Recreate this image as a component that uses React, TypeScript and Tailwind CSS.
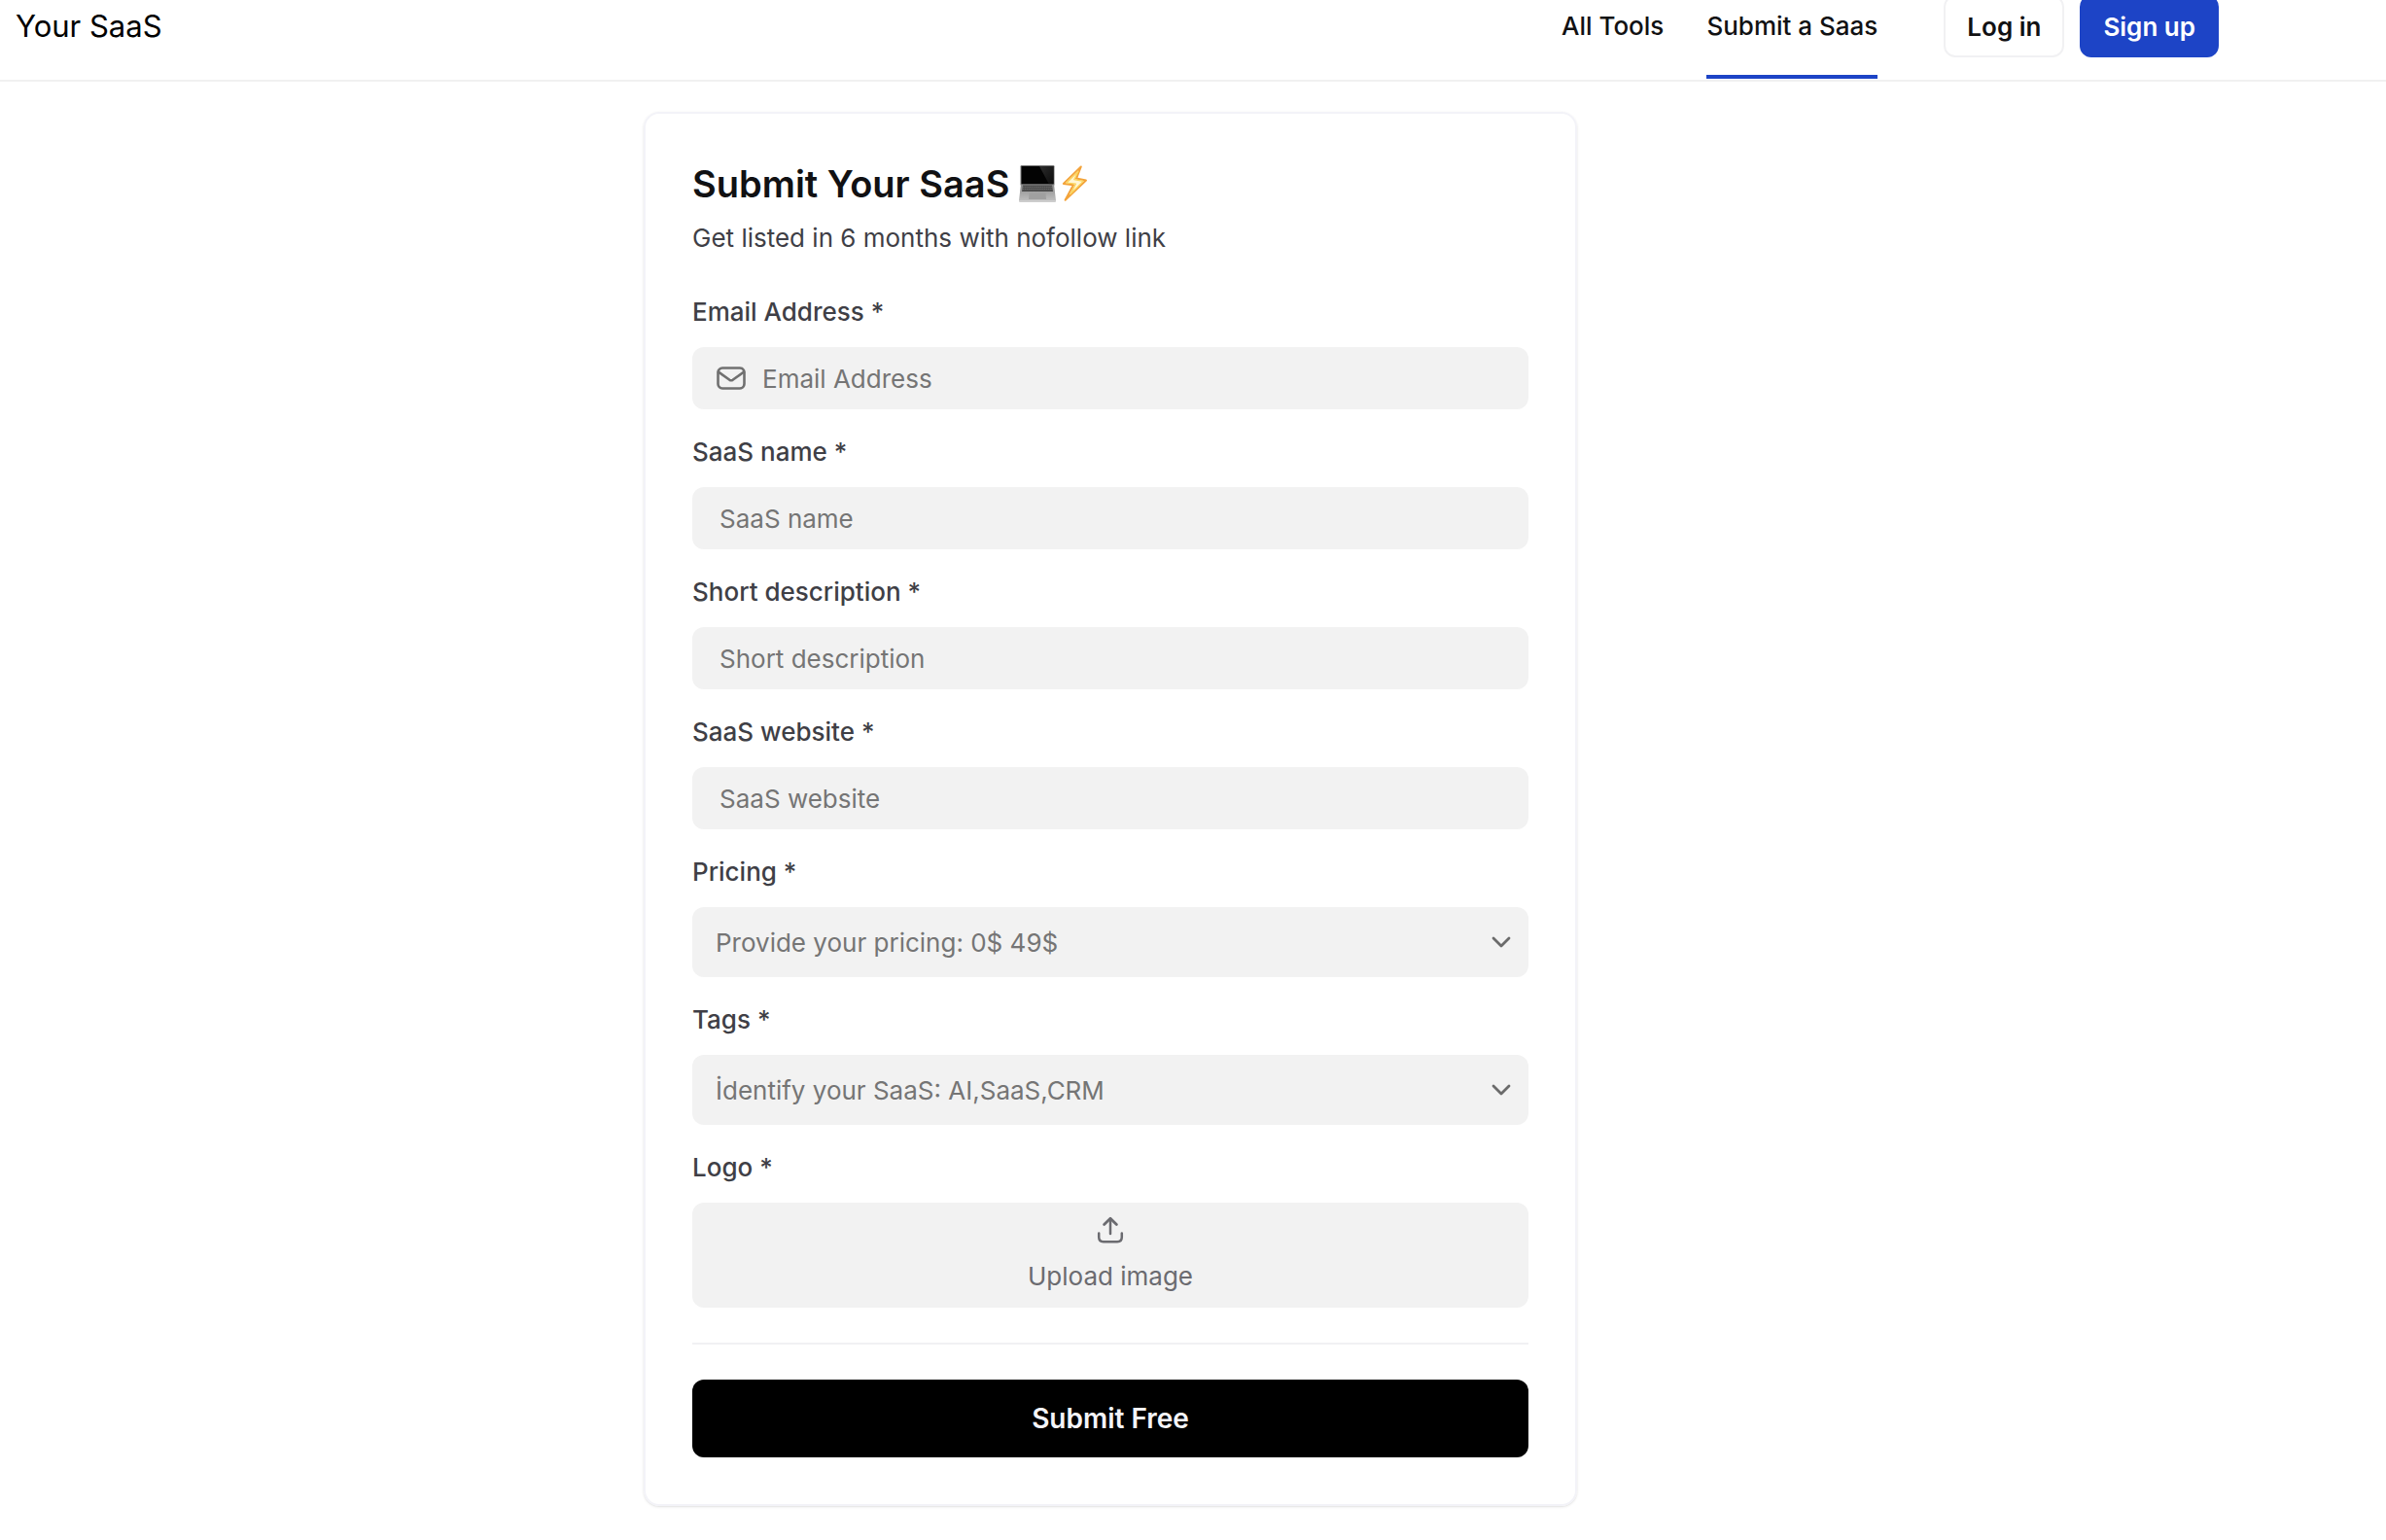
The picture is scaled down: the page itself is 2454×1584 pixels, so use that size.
import React, { useState } from "react";

function LaptopIcon() {
  return (
    <svg width="38" height="38" viewBox="0 0 38 38" role="img" aria-label="laptop">
      <defs>
        <linearGradient id="base" x1="0" y1="0" x2="0" y2="1">
          <stop offset="0" stopColor="#8a8a8a" />
          <stop offset="1" stopColor="#bdbdbd" />
        </linearGradient>
        <linearGradient id="glare" x1="0" y1="0" x2="1" y2="1">
          <stop offset="0" stopColor="#2c2c2c" />
          <stop offset="1" stopColor="#0c0c0c" />
        </linearGradient>
      </defs>
      <rect x="1.5" y="0" width="35" height="21" rx="1.2" fill="#777777" />
      <rect x="2.5" y="1" width="33" height="18.6" fill="#030303" />
      <path d="M21 1H35.5V19.6H31Z" fill="url(#glare)" />
      <path d="M2 19.6H36L38 36H0Z" fill="url(#base)" />
      <path d="M4 20.6H34L35 27H3Z" fill="#4d4d4d" />
      <path d="M3.8 22.4H34.2M3.5 24.6H34.5" stroke="#8a8a8a" strokeWidth="0.5" strokeDasharray="1.6 0.6" />
      <path d="M10.5 28.5H27.5L28 35H10Z" fill="#a0a0a0" />
      <path d="M0 36H38V37Q38 38 37 38H1Q0 38 0 37Z" fill="#cdcdcd" />
    </svg>
  );
}

function BoltIcon() {
  return (
    <svg width="28" height="38" viewBox="0 0 28 38" role="img" aria-label="lightning">
      <path d="M19.8 1.4L1.8 18.9L12 20.2L3.6 35.8L25 15.6L15 13.6Z" fill="#fff6d6" stroke="#f3a33a" strokeWidth="2" strokeLinejoin="round" />
      <path d="M17 6.4L5 18L14.4 19.2L9 29.6L22 16.4L12.8 14.6Z" fill="none" stroke="#fbd45a" strokeWidth="1.2" strokeLinejoin="round" />
    </svg>
  );
}

function MailIcon() {
  return (
    <svg width="30" height="24" viewBox="0 0 30 24" fill="none" stroke="#707070" strokeWidth="2.6" strokeLinecap="round" strokeLinejoin="round" aria-hidden="true">
      <rect x="1.5" y="1.5" width="27" height="21" rx="4.5" />
      <path d="M2 5.6L13.4 13.8Q15 14.8 16.6 13.8L28 5.6" />
    </svg>
  );
}

function UploadIcon() {
  return (
    <svg width="28" height="28" viewBox="0 0 28 28" fill="none" stroke="#6b6b70" strokeWidth="2.5" strokeLinecap="round" strokeLinejoin="round" aria-hidden="true">
      <path d="M14 18V2.4" />
      <path d="M7.6 8.6L14 2.2L20.4 8.6" strokeWidth="2.8" />
      <path d="M2.2 17.6V21.6Q2.2 26.2 6.8 26.2H21.2Q25.8 26.2 25.8 21.6V17.6" />
    </svg>
  );
}

function Field({ id, label, children }: { id: string; label: string; children: React.ReactNode }) {
  return (
    <div className="flex flex-col gap-4">
      <label htmlFor={id} className="text-[26px] leading-10 font-medium text-[#3f3f46]">
        {label} *
      </label>
      {children}
    </div>
  );
}

const inputClass =
  "h-16 w-full rounded-xl bg-[#f2f2f2] pr-7 text-[26px] text-[#18181b] placeholder:text-[#757575] outline-none";

function TextField({ id, label, type = "text" }: { id: string; label: string; type?: string }) {
  return (
    <Field id={id} label={label}>
      <input id={id} type={type} placeholder={label} className={inputClass + " pl-7"} />
    </Field>
  );
}

function SelectField({ id, label, placeholder, options }: { id: string; label: string; placeholder: string; options: string[] }) {
  const [value, setValue] = useState("");
  return (
    <Field id={id} label={label}>
      <div className="relative">
        <select
          id={id}
          value={value}
          onChange={(e) => setValue(e.target.value)}
          className="h-18 w-full appearance-none rounded-xl bg-[#f2f2f2] px-6 text-[26px] text-[#757575] outline-none"
        >
          <option value="">{placeholder}</option>
          {options.map((o) => (
            <option key={o}>{o}</option>
          ))}
        </select>
        <svg className="pointer-events-none absolute inset-y-0 right-[18px] my-auto" width="20" height="12" viewBox="0 0 20 12" fill="none" stroke="#6b6b6b" strokeWidth="2.8" strokeLinecap="round" strokeLinejoin="round" aria-hidden="true">
          <path d="M2 2L10 10L18 2" />
        </svg>
      </div>
    </Field>
  );
}

export default function App() {
  return (
    <div className="min-h-screen bg-white font-['Inter',sans-serif] text-[#111113]">
      <header className="flex h-[84px] items-start justify-between border-b-2 border-[#f1f1f1] pr-[172px] pl-4">
        <a href="#" className="flex h-[54px] items-center text-[31px] text-black">
          Your SaaS
        </a>
        <div className="flex items-start gap-[68px]">
          <nav className="flex gap-11 text-[26px] font-medium">
            <a href="#tools" className="h-[81px] leading-[54px]">
              All Tools
            </a>
            <a href="#submit" aria-current="page" className="h-[81px] border-b-4 border-[#1d44c6] leading-[54px]">
              Submit a Saas
            </a>
          </nav>
          <div className="-mt-[5px] flex gap-4 text-[26px] font-semibold">
            <button className="h-16 rounded-xl border-2 border-[#f1f1f3] px-[22px]">Log in</button>
            <button className="h-16 rounded-xl bg-[#1d44c6] px-6 text-white">Sign up</button>
          </div>
        </div>
      </header>

      <main className="pt-[31px] pr-[170px] pb-8">
        <form
          onSubmit={(e) => e.preventDefault()}
          className="mx-auto flex max-w-[960px] flex-col rounded-2xl border-2 border-[#f3f3f8] p-12 shadow-sm"
        >
          <h1 className="flex h-12 items-center text-[38px] font-semibold">
            Submit Your SaaS
            <span className="ml-2.5 flex gap-1.5">
              <LaptopIcon />
              <BoltIcon />
            </span>
          </h1>
          <p className="mt-3 text-[26px] leading-10 text-[#3f3f46]">Get listed in 6 months with nofollow link</p>

          <div className="mt-9 flex flex-col gap-6">
            <Field id="email" label="Email Address">
              <div className="relative">
                <span className="pointer-events-none absolute inset-y-0 left-[25px] flex items-center">
                  <MailIcon />
                </span>
                <input id="email" type="email" placeholder="Email Address" className={inputClass + " pl-[72px]"} />
              </div>
            </Field>
            <TextField id="name" label="SaaS name" />
            <TextField id="description" label="Short description" />
            <TextField id="website" label="SaaS website" />
            <SelectField id="pricing" label="Pricing" placeholder="Provide your pricing: 0$ 49$" options={["Free", "Freemium", "Paid"]} />
            <SelectField id="tags" label="Tags" placeholder="İdentify your SaaS: AI,SaaS,CRM" options={["AI", "SaaS", "CRM"]} />
            <Field id="logo" label="Logo">
              <button id="logo" type="button" className="flex h-[108px] flex-col items-center rounded-xl bg-[#f2f2f2] pt-3.5 text-[26px] leading-10 text-[#6b6b70]">
                <UploadIcon />
                <span className="mt-3.5">Upload image</span>
              </button>
            </Field>
          </div>

          <hr className="my-9 border-t-2 border-[#f1f1f3]" />
          <button type="submit" className="h-20 rounded-xl bg-black text-[28px] font-semibold text-[#f4f4f8]">
            Submit Free
          </button>
        </form>
      </main>
    </div>
  );
}
